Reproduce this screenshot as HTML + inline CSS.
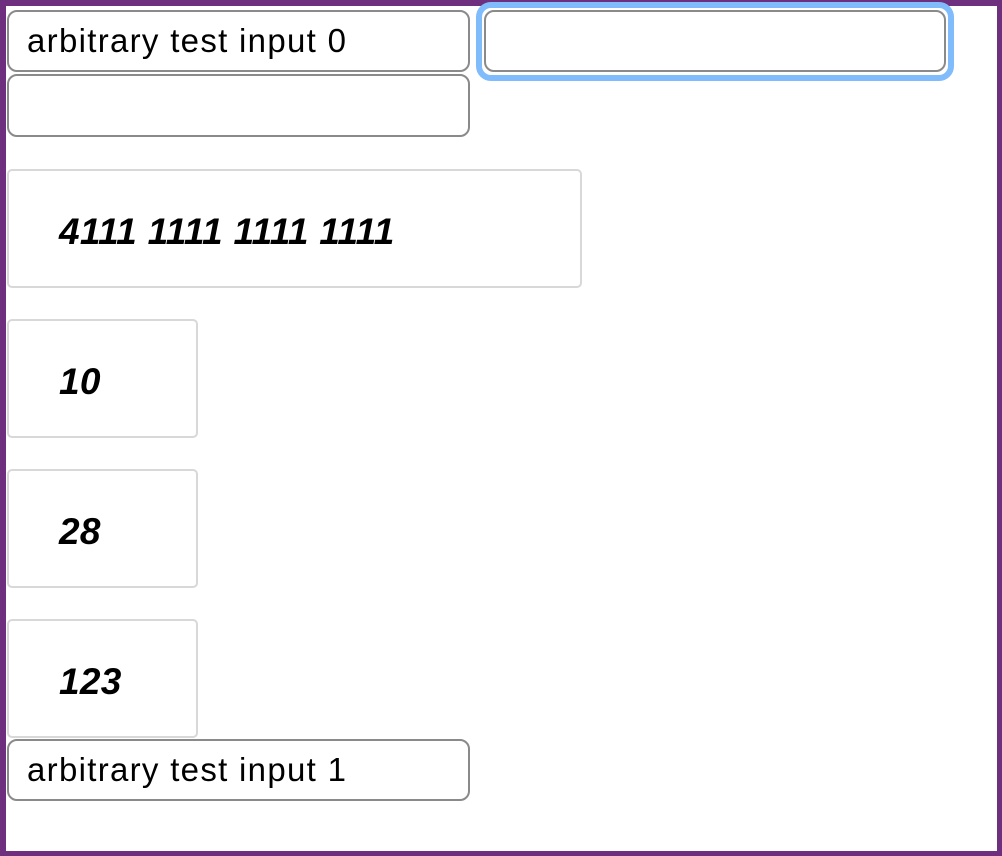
<!DOCTYPE html>
<html><head><style>
html,body{margin:0;padding:0;}
body{width:1002px;height:856px;position:relative;background:#fff;overflow:hidden;font-family:"Liberation Sans",sans-serif;}
.frame{position:absolute;left:0;top:0;width:1002px;height:856px;box-sizing:border-box;border-style:solid;border-color:#6e2f7f;border-width:6px 5px 5px 6px;z-index:5;pointer-events:none;}
.inp{position:absolute;box-sizing:border-box;border:2px solid #8a8a8a;border-radius:10px;background:#fff;font-size:33px;letter-spacing:1.3px;color:#000;padding-left:18px;line-height:58px;}
.ring{position:absolute;left:476px;top:2px;width:478px;height:79px;box-sizing:border-box;border:6px solid #80bbfc;border-radius:15px;z-index:6;}
.box{position:absolute;box-sizing:border-box;border:2px solid #d8d8d8;border-radius:5px;background:#fff;font-size:37px;font-weight:bold;font-style:italic;padding-left:50px;letter-spacing:0.3px;}
</style></head><body>
<div class="frame"></div>
<div class="inp" style="left:7px;top:10px;width:463px;height:62px;">arbitrary test input 0</div>
<div class="inp" style="left:484px;top:10px;width:462px;height:62px;"></div>
<div class="ring"></div>
<div class="inp" style="left:7px;top:74px;width:463px;height:63px;"></div>
<div class="box" style="left:7px;top:169px;width:575px;height:119px;line-height:122px;">4111 1111 1111 1111</div>
<div class="box" style="left:7px;top:319px;width:191px;height:119px;line-height:122px;">10</div>
<div class="box" style="left:7px;top:469px;width:191px;height:119px;line-height:122px;">28</div>
<div class="box" style="left:7px;top:619px;width:191px;height:119px;line-height:122px;">123</div>
<div class="inp" style="left:7px;top:739px;width:463px;height:62px;">arbitrary test input 1</div>
</body></html>
